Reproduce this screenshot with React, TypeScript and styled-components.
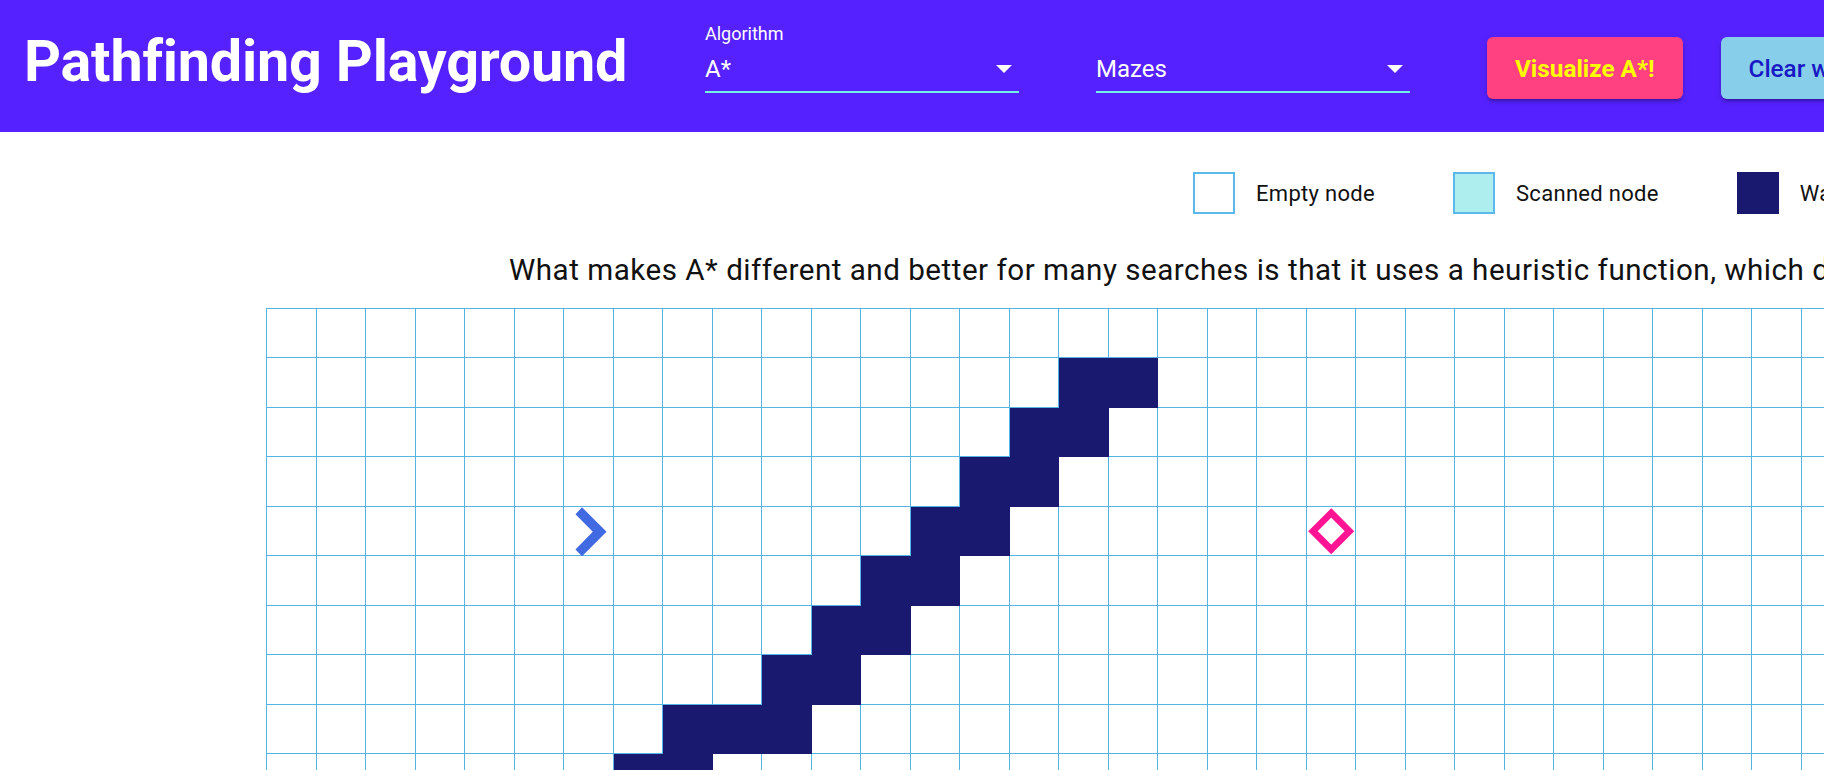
import React from 'react';
import styled, { createGlobalStyle } from 'styled-components';

const COLS = 36;
const ROWS = 10;

const WALLS: Record<number, number[]> = {
    1: [16, 17],
    2: [15, 16],
    3: [14, 15],
    4: [13, 14],
    5: [12, 13],
    6: [11, 12],
    7: [10, 11],
    8: [8, 9, 10],
    9: [7, 8],
};
const START = { row: 4, col: 6 };
const TARGET = { row: 4, col: 21 };

type Kind = 'empty' | 'scanned' | 'wall';

const GlobalStyle = createGlobalStyle`
    html, body {
        margin: 0;
        padding: 0;
        overflow: hidden;
        background: #ffffff;
        font-family: Roboto, "Noto Sans", "Liberation Sans", sans-serif;
    }
`;

const Page = styled.div`
    width: 1824px;
    min-height: 770px;
`;

const Header = styled.header`
    height: 132px;
    background: #5522ff;
    display: flex;
    align-items: center;
    padding-left: 24px;
    box-sizing: border-box;
    white-space: nowrap;
    > * {
        flex-shrink: 0;
    }
`;

const Brand = styled.h1`
    flex: 0 0 681px;
    margin: 0;
    margin-top: -8px;
    font-size: 57.5px;
    font-weight: 700;
    line-height: 1;
    letter-spacing: -0.2px;
    color: #ffffff;
`;

const SelectWrap = styled.div`
    width: 314px;
    display: flex;
    flex-direction: column;
    padding-bottom: 14px;
    margin-right: 77px;
`;

const SelectLabel = styled.label`
    height: 18px;
    font-size: 18px;
    line-height: 18px;
    color: #ffffff;
    margin-bottom: 14px;
`;

const SelectRow = styled.div`
    display: flex;
    align-items: center;
    justify-content: space-between;
    padding-bottom: 10px;
    border-bottom: 2px solid #72f0e2;
`;

const SelectValue = styled.span`
    font-size: 24px;
    line-height: 24px;
    color: #ffffff;
`;

const Caret = styled.span`
    width: 0;
    height: 0;
    margin-right: 7px;
    border-left: 8px solid transparent;
    border-right: 8px solid transparent;
    border-top: 8px solid #ffffff;
`;

const Button = styled.button<{ $bg: string; $fg: string; $weight: number }>`
    height: 62px;
    margin-top: 4px;
    margin-right: 38px;
    padding: 0 28px;
    border: none;
    border-radius: 6px;
    background: ${(p) => p.$bg};
    color: ${(p) => p.$fg};
    font-family: Roboto, "Noto Sans", sans-serif;
    font-size: 24.3px;
    font-weight: ${(p) => p.$weight};
    white-space: nowrap;
    box-shadow: 0 4px 2px -3px rgba(0, 0, 0, 0.2), 0 3px 3px rgba(0, 0, 0, 0.14), 0 2px 7px rgba(0, 0, 0, 0.12);
    cursor: pointer;
`;

const Legend = styled.ul`
    list-style: none;
    margin: 40px 0 0;
    padding: 0 0 0 1193px;
    display: flex;
    gap: 78px;
    white-space: nowrap;
    > li {
        flex-shrink: 0;
    }
`;

const LegendItem = styled.li`
    display: flex;
    align-items: center;
    gap: 21px;
    font-size: 22px;
    letter-spacing: 0.3px;
    color: #111111;
`;

const Swatch = styled.span<{ $kind: Kind }>`
    width: 42px;
    height: 42px;
    box-sizing: border-box;
    border: 2px solid ${(p) => (p.$kind === 'wall' ? '#191970' : '#5bb8e8')};
    background: ${(p) => (p.$kind === 'wall' ? '#191970' : p.$kind === 'scanned' ? '#afeeee' : '#ffffff')};
`;

const Description = styled.p`
    margin: 40px 0 0 509px;
    font-size: 29.6px;
    line-height: 33.6px;
    letter-spacing: 0.5px;
    color: #111111;
    white-space: nowrap;
`;

const Board = styled.div`
    margin: 20px 0 0 266px;
    display: grid;
    grid-template-columns: repeat(${COLS}, 49.5px);
    grid-auto-rows: 49.5px;
    width: max-content;
    border-top: 1px solid #55b4e6;
    border-left: 1px solid #55b4e6;
`;

const Cell = styled.div<{ $wall: boolean }>`
    box-sizing: border-box;
    display: flex;
    border-right: 1px solid ${(p) => (p.$wall ? '#191970' : '#55b4e6')};
    border-bottom: 1px solid ${(p) => (p.$wall ? '#191970' : '#55b4e6')};
    background: ${(p) => (p.$wall ? '#191970' : '#ffffff')};
`;

const Marker = styled.svg`
    width: 100%;
    height: 100%;
    overflow: visible;
`;

const StartIcon = () => (
    <Marker viewBox="0 0 49.5 49.5">
        <polygon points="18.4,0.3 43.4,25.3 18.4,50.3 11.7,43.3 29.4,25.3 11.7,7.3" fill="#4169e1" />
    </Marker>
);

const TargetIcon = () => (
    <Marker viewBox="0 0 49.5 49.5">
        <path d="M24.7 6.1 L43.3 24.7 L24.7 43.3 L6.1 24.7 Z" fill="none" stroke="#ff1493" strokeWidth="6.9" strokeLinejoin="miter" />
    </Marker>
);

const App = () => {
    const rows = Array.from({ length: ROWS }, (_, r) => r);
    const cols = Array.from({ length: COLS }, (_, c) => c);

    return (
        <Page>
            <GlobalStyle />
            <Header>
                <Brand>Pathfinding Playground</Brand>
                <SelectWrap>
                    <SelectLabel>Algorithm</SelectLabel>
                    <SelectRow>
                        <SelectValue>A*</SelectValue>
                        <Caret />
                    </SelectRow>
                </SelectWrap>
                <SelectWrap>
                    <SelectLabel />
                    <SelectRow>
                        <SelectValue>Mazes</SelectValue>
                        <Caret />
                    </SelectRow>
                </SelectWrap>
                <Button $bg="#ff4081" $fg="#ffff00" $weight={700}>Visualize A*!</Button>
                <Button $bg="#87ceeb" $fg="#1818c4" $weight={500}>Clear walls</Button>
            </Header>

            <Legend>
                <LegendItem><Swatch $kind="empty" />Empty node</LegendItem>
                <LegendItem><Swatch $kind="scanned" />Scanned node</LegendItem>
                <LegendItem><Swatch $kind="wall" />Wall node</LegendItem>
            </Legend>

            <Description>
                What makes A* different and better for many searches is that it uses a heuristic function, which directs the search towards the target.
            </Description>

            <Board>
                {rows.map((r) =>
                    cols.map((c) => {
                        const wall = (WALLS[r] || []).includes(c);
                        return (
                            <Cell key={`${r}-${c}`} $wall={wall}>
                                {r === START.row && c === START.col && <StartIcon />}
                                {r === TARGET.row && c === TARGET.col && <TargetIcon />}
                            </Cell>
                        );
                    })
                )}
            </Board>
        </Page>
    );
};

export default App;
